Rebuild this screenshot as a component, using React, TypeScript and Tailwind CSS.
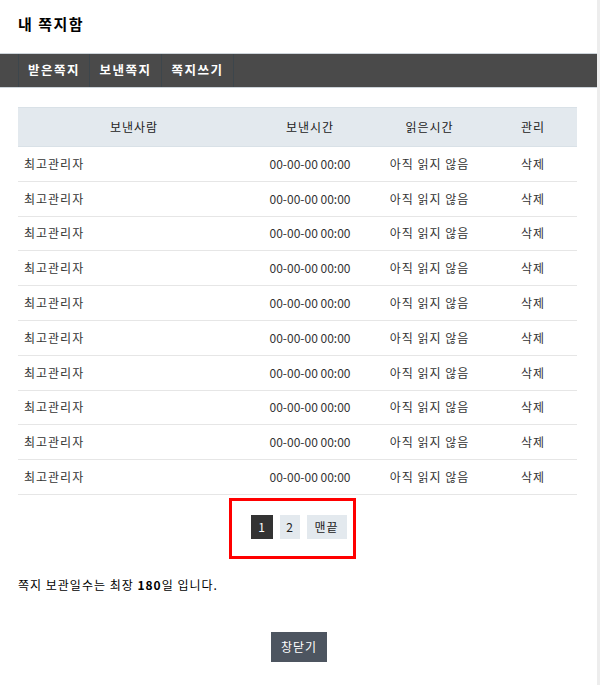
import React from "react";

const rows = Array.from({ length: 10 });

export default function App() {
  return (
    <div
      className="flex w-[600px] min-h-[685px] bg-white text-[12px] text-[#333] tracking-[1px]"
      style={{ fontFamily: '"Noto Sans CJK KR", "Noto Sans", sans-serif' }}
    >
      <div className="relative w-[597px] flex flex-col">
        <h1 className="h-[53px] pl-[18px] pt-[14px] text-[15px] font-bold text-black leading-[20px] tracking-[1.5px]">
          내 쪽지함
        </h1>
        <nav className="h-[35px] bg-[#4a4a4a] border-y border-[#cdd4da] flex pl-[18px]">
          {["받은쪽지", "보낸쪽지", "쪽지쓰기"].map((t, i) => (
            <div
              key={t}
              className={`w-[72px] h-full flex items-center justify-center font-bold text-white border-r border-[#3d464c] text-[12.5px] tracking-[1.5px] ${
                i === 0 ? "border-l" : ""
              }`}
            >
              {t}
            </div>
          ))}
        </nav>
        <div className="px-[18px] pt-[19px]">
          <table className="w-[559px] border-collapse table-fixed">
            <colgroup>
              <col className="w-[232px]" />
              <col className="w-[120px]" />
              <col className="w-[119px]" />
              <col className="w-[88px]" />
            </colgroup>
            <thead>
              <tr className="h-[39px] bg-[#e3e9ee] border-t border-[#d5dde3] border-b border-[#d9e1e7]">
                <th className="font-normal text-[#222]">보낸사람</th>
                <th className="font-normal text-[#222]">보낸시간</th>
                <th className="font-normal text-[#222]">읽은시간</th>
                <th className="font-normal text-[#222]">관리</th>
              </tr>
            </thead>
            <tbody>
              {rows.map((_, i) => (
                <tr key={i} className="h-[34.8px] border-b border-[#e6e6e6]">
                  <td className="pl-[6px]">최고관리자</td>
                  <td className="text-center tracking-[0px]">00-00-00 00:00</td>
                  <td className="text-center">아직 읽지 않음</td>
                  <td className="text-center">삭제</td>
                </tr>
              ))}
            </tbody>
          </table>
        </div>
        <div className="relative h-[61px] mt-[3px] flex justify-center items-start pt-[17px] gap-[7px] tracking-[0px]">
          <span className="w-[22px] h-[24px] bg-[#333] text-white flex items-center justify-center">1</span>
          <span className="w-[20px] h-[24px] bg-[#e3e9ee] text-[#222] flex items-center justify-center">2</span>
          <span className="w-[40px] h-[24px] bg-[#e3e9ee] text-[#222] flex items-center justify-center tracking-[1px]">맨끝</span>
          <div className="absolute left-[229px] top-0 w-[127px] h-[61px] border-[3px] border-[#ff0000]" />
        </div>
        <p className="pl-[18px] pt-[17px] text-black leading-[18px]">
          쪽지 보관일수는 최장 <b>180</b>일 입니다.
        </p>
        <div className="flex justify-center pt-[38px] pl-[1px]">
          <button className="w-[56px] h-[30px] bg-[#4d5560] text-white text-[12px] tracking-[1px]">창닫기</button>
        </div>
      </div>
      <div className="w-[3px] bg-[#ededed]" />
    </div>
  );
}
